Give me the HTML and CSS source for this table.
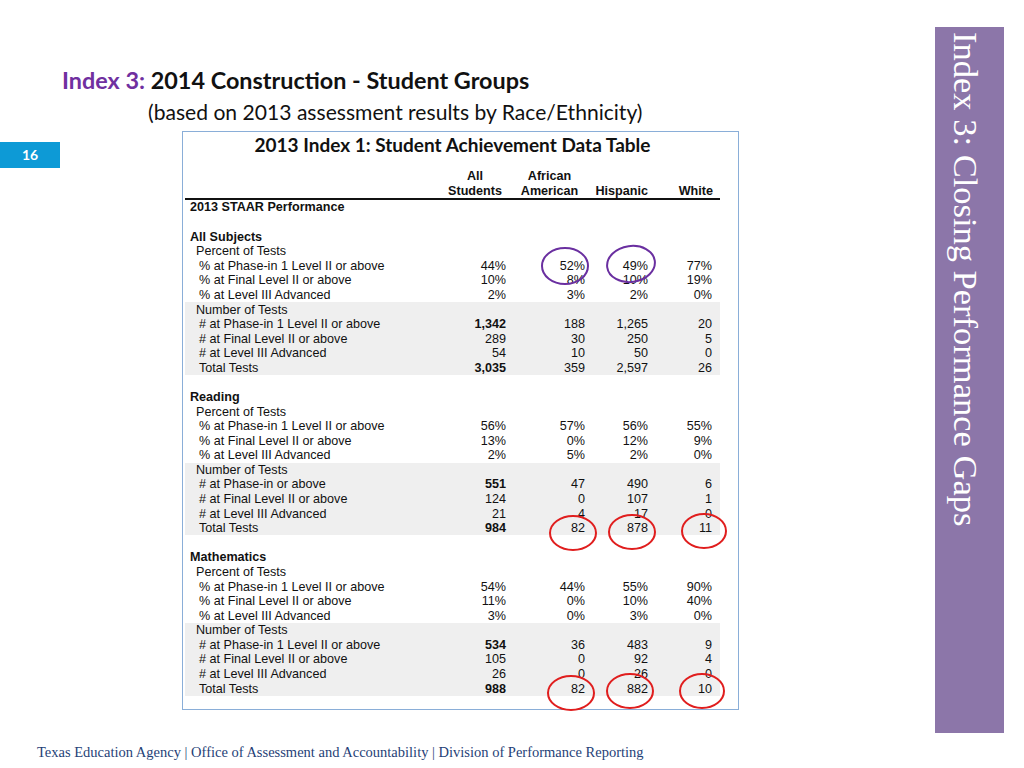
FILE: index.html
```html
<!DOCTYPE html>
<html>
<head>
<meta charset="utf-8">
<link rel="stylesheet" href="styles.css">
</head>
<body>
<div class="page">
  <div class="main">
    <h1 class="title"><span class="accent">Index 3:</span> 2014 Construction - Student Groups</h1>
    <p class="subtitle">(based on 2013 assessment results by Race/Ethnicity)</p>
    <div class="content-row">
      <div class="badge">16</div>
      <div class="table-box">
        <div class="caption">2013 Index 1: Student Achievement Data Table</div>
        <table class="data">
          <colgroup>
            <col class="c-label"><col class="c-all"><col class="c-aa"><col class="c-his"><col class="c-wh">
          </colgroup>
          <thead>
            <tr><th></th><th class="h-center">All</th><th class="h-center">African</th><th></th><th></th></tr>
            <tr class="h2"><th></th><th class="h-center">Students</th><th class="h-center">American</th><th class="h-right">Hispanic</th><th class="h-right">White</th></tr>
          </thead>
          <tbody>
            <tr><td class="head">2013 STAAR Performance</td><td></td><td></td><td></td><td></td></tr>
            <tr><td></td><td></td><td></td><td></td><td></td></tr>
            <tr><td class="head">All Subjects</td><td></td><td></td><td></td><td></td></tr>
            <tr><td class="sub">Percent of Tests</td><td></td><td></td><td></td><td></td></tr>
            <tr><td class="item">% at Phase-in 1 Level II or above</td><td>44%</td><td>52%</td><td>49%</td><td>77%</td></tr>
            <tr><td class="item">% at Final Level II or above</td><td>10%</td><td>8%</td><td>10%</td><td>19%</td></tr>
            <tr><td class="item">% at Level III Advanced</td><td>2%</td><td>3%</td><td>2%</td><td>0%</td></tr>
            <tr class="shade"><td class="sub">Number of Tests</td><td></td><td></td><td></td><td></td></tr>
            <tr class="shade"><td class="item"># at Phase-in 1 Level II or above</td><td class="b">1,342</td><td>188</td><td>1,265</td><td>20</td></tr>
            <tr class="shade"><td class="item"># at Final Level II or above</td><td>289</td><td>30</td><td>250</td><td>5</td></tr>
            <tr class="shade"><td class="item"># at Level III Advanced</td><td>54</td><td>10</td><td>50</td><td>0</td></tr>
            <tr class="shade"><td class="item">Total Tests</td><td class="b">3,035</td><td>359</td><td>2,597</td><td>26</td></tr>
            <tr><td></td><td></td><td></td><td></td><td></td></tr>
            <tr><td class="head">Reading</td><td></td><td></td><td></td><td></td></tr>
            <tr><td class="sub">Percent of Tests</td><td></td><td></td><td></td><td></td></tr>
            <tr><td class="item">% at Phase-in 1 Level II or above</td><td>56%</td><td>57%</td><td>56%</td><td>55%</td></tr>
            <tr><td class="item">% at Final Level II or above</td><td>13%</td><td>0%</td><td>12%</td><td>9%</td></tr>
            <tr><td class="item">% at Level III Advanced</td><td>2%</td><td>5%</td><td>2%</td><td>0%</td></tr>
            <tr class="shade"><td class="sub">Number of Tests</td><td></td><td></td><td></td><td></td></tr>
            <tr class="shade"><td class="item"># at Phase-in or above</td><td class="b">551</td><td>47</td><td>490</td><td>6</td></tr>
            <tr class="shade"><td class="item"># at Final Level II or above</td><td>124</td><td>0</td><td>107</td><td>1</td></tr>
            <tr class="shade"><td class="item"># at Level III Advanced</td><td>21</td><td>4</td><td>17</td><td>0</td></tr>
            <tr class="shade"><td class="item">Total Tests</td><td class="b">984</td><td>82</td><td>878</td><td>11</td></tr>
            <tr><td></td><td></td><td></td><td></td><td></td></tr>
            <tr><td class="head">Mathematics</td><td></td><td></td><td></td><td></td></tr>
            <tr><td class="sub">Percent of Tests</td><td></td><td></td><td></td><td></td></tr>
            <tr><td class="item">% at Phase-in 1 Level II or above</td><td>54%</td><td>44%</td><td>55%</td><td>90%</td></tr>
            <tr><td class="item">% at Final Level II or above</td><td>11%</td><td>0%</td><td>10%</td><td>40%</td></tr>
            <tr><td class="item">% at Level III Advanced</td><td>3%</td><td>0%</td><td>3%</td><td>0%</td></tr>
            <tr class="shade"><td class="sub">Number of Tests</td><td></td><td></td><td></td><td></td></tr>
            <tr class="shade"><td class="item"># at Phase-in 1 Level II or above</td><td class="b">534</td><td>36</td><td>483</td><td>9</td></tr>
            <tr class="shade"><td class="item"># at Final Level II or above</td><td>105</td><td>0</td><td>92</td><td>4</td></tr>
            <tr class="shade"><td class="item"># at Level III Advanced</td><td>26</td><td>0</td><td>26</td><td>0</td></tr>
            <tr class="shade"><td class="item">Total Tests</td><td class="b">988</td><td>82</td><td>882</td><td>10</td></tr>
          </tbody>
        </table>
      </div>
    </div>
    <div class="footer">Texas Education Agency | Office of Assessment and Accountability | Division of Performance Reporting</div>
  </div>
  <div class="sidebar"><span class="side-text">Index 3: Closing Performance Gaps</span></div>
</div>
<svg class="marks" width="1024" height="768" viewBox="0 0 1024 768" aria-hidden="true">
  <g fill="none" stroke-width="2">
    <ellipse cx="565" cy="266" rx="23" ry="18" stroke="#6a2fa0"/>
    <ellipse cx="631" cy="264" rx="24" ry="18" stroke="#6a2fa0" transform="rotate(-8 631 264)"/>
    <ellipse cx="573" cy="533" rx="23" ry="17" stroke="#e01e1e"/>
    <ellipse cx="632" cy="532" rx="23" ry="17" stroke="#e01e1e"/>
    <ellipse cx="704" cy="531" rx="22" ry="17" stroke="#e01e1e"/>
    <ellipse cx="571" cy="693" rx="23" ry="17" stroke="#e01e1e"/>
    <ellipse cx="630" cy="691" rx="23" ry="17" stroke="#e01e1e"/>
    <ellipse cx="702" cy="691" rx="22" ry="17" stroke="#e01e1e"/>
  </g>
</svg>
</body>
</html>
```
FILE: styles.css
```css
html, body {
  margin: 0;
  padding: 0;
  background: #ffffff;
}
body {
  width: 1024px;
  height: 768px;
  position: relative;
  overflow: hidden;
  font-family: "Liberation Sans", Arial, sans-serif;
  color: #111;
}
.page {
  display: flex;
  height: 768px;
}
.main {
  flex: 1;
  display: flex;
  flex-direction: column;
}
.title {
  margin: 0;
  padding: 65px 0 0 62px;
  font-family: Lato, "Open Sans", sans-serif;
  font-weight: 700;
  font-size: 23.4px;
  line-height: 30px;
  color: #111;
}
.accent {
  color: #7030a0;
}
.subtitle {
  margin: 0;
  padding: 3px 0 0 148px;
  font-family: Lato, "Open Sans", sans-serif;
  font-size: 21.1px;
  line-height: 28px;
  color: #111;
}
.content-row {
  display: flex;
  align-items: flex-start;
  margin-top: 5px;
}
.badge {
  width: 60px;
  height: 26px;
  margin-top: 11px;
  background: #0d9ad6;
  color: #fff;
  font-family: Lato, "Open Sans", sans-serif;
  font-weight: 700;
  font-size: 14px;
  line-height: 26px;
  text-align: center;
}
.table-box {
  margin-left: 122px;
  width: 555px;
  height: 577px;
  border: 1px solid #8aaed8;
  box-sizing: content-box;
}
.caption {
  margin-top: 1px;
  height: 36px;
  font-family: Lato, "Open Sans", sans-serif;
  font-weight: 700;
  font-size: 19px;
  line-height: 24px;
  text-align: center;
  padding-right: 16px;
}
.data {
  margin-left: 2px;
  width: 535px;
  border-collapse: collapse;
  table-layout: fixed;
  font-size: 12.6px;
}
.c-label { width: 255px; }
.c-all { width: 70px; }
.c-aa { width: 79px; }
.c-his { width: 63px; }
.c-wh { width: 68px; }
.data th {
  font-weight: 700;
  height: 14.6px;
  line-height: 14px;
  padding: 0 4px 0 0;
  vertical-align: middle;
}
.data th.h-center { text-align: center; padding-right: 0; }
.data th.h-right { text-align: right; }
.data th:last-child { padding-right: 7px; }
.data thead tr.h2 th {
  border-bottom: 2px solid #111;
}
.data td {
  height: 14.58px;
  line-height: 14px;
  padding: 0 4px 0 0;
  text-align: right;
  white-space: nowrap;
  vertical-align: middle;
}
.data td:last-child { padding-right: 8px; }
.data td.head {
  text-align: left;
  font-weight: 700;
  padding-left: 5px;
}
.data td.sub {
  text-align: left;
  padding-left: 11px;
}
.data td.item {
  text-align: left;
  padding-left: 14px;
}
.data td.b {
  font-weight: 700;
}
.data tr.shade td {
  background: #efefef;
}
.footer {
  margin-top: 34px;
  padding-left: 37px;
  font-family: "Liberation Serif", "Times New Roman", serif;
  font-size: 14.5px;
  line-height: 16px;
  color: #1f3f77;
}
.sidebar {
  width: 69px;
  margin: 27px 20px 35px 0;
  background: #8c76a9;
  display: flex;
  justify-content: center;
  padding-top: 5px;
  box-sizing: border-box;
}
.side-text {
  writing-mode: vertical-rl;
  font-family: "Liberation Serif", "Times New Roman", serif;
  font-size: 34.5px;
  line-height: 40px;
  color: #ffffff;
  margin-left: -8px;
}
.marks {
  position: absolute;
  left: 0;
  top: 0;
  pointer-events: none;
}
```
